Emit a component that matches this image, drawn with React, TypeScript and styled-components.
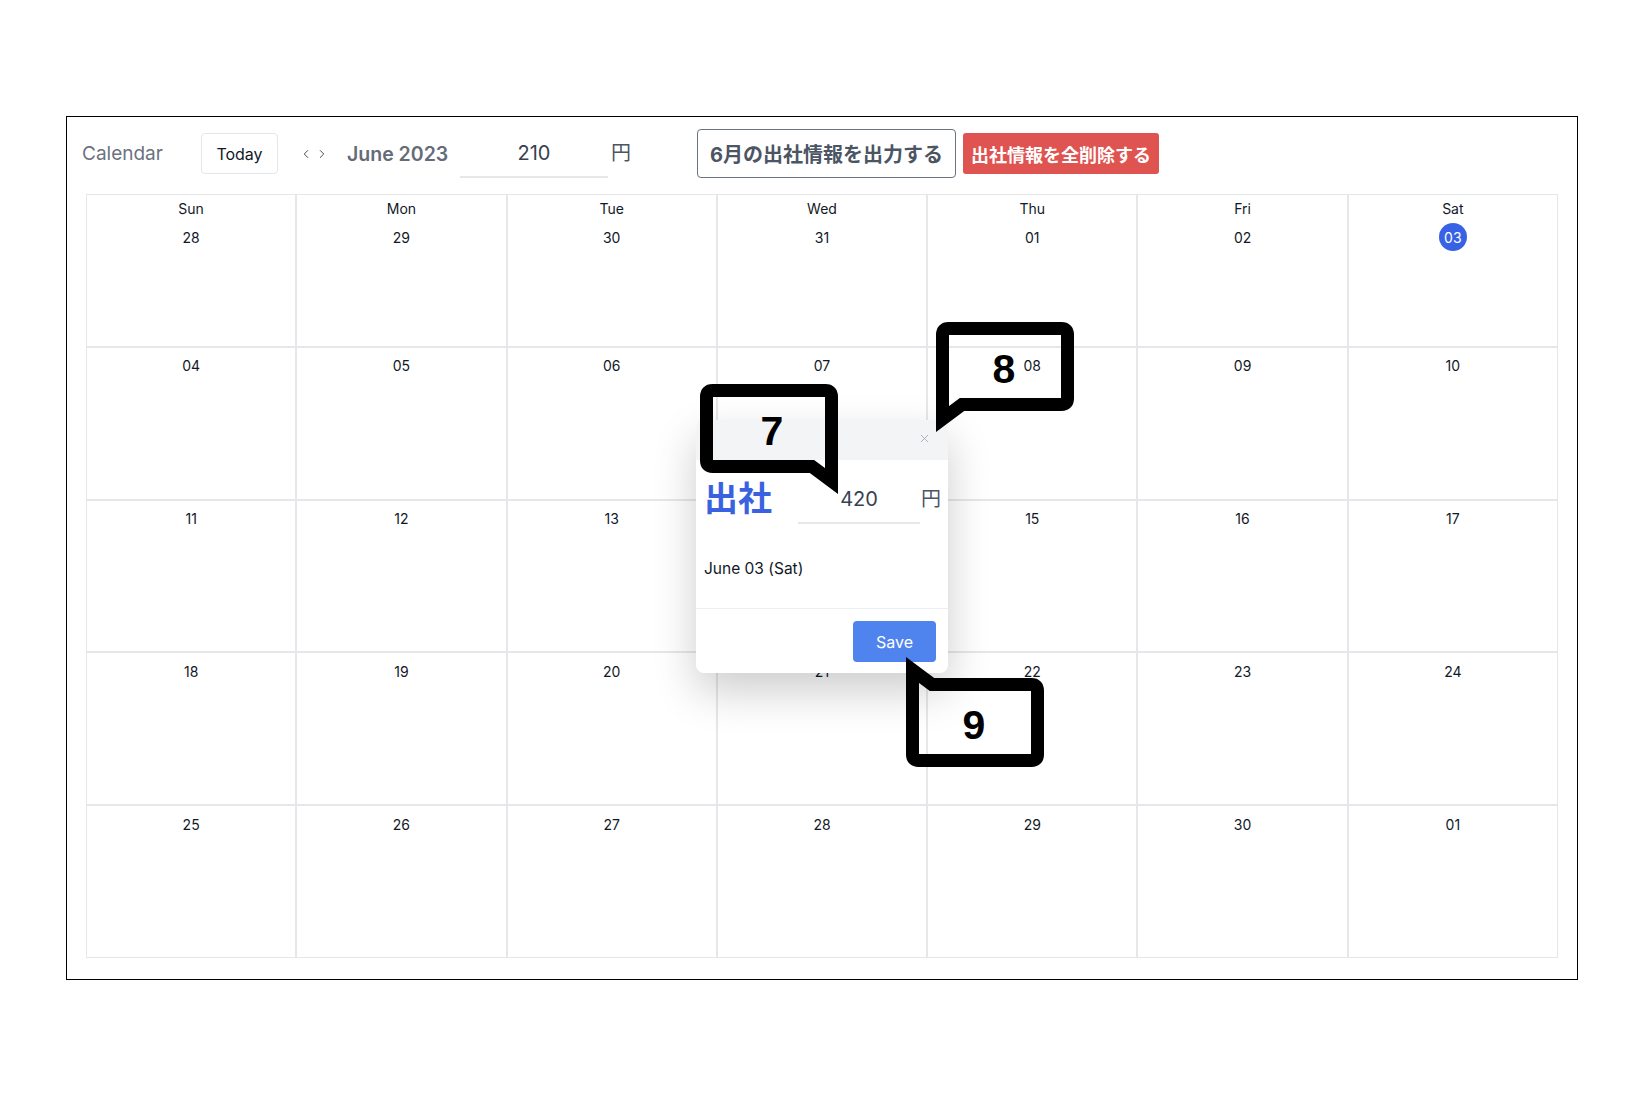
import React from "react";
import styled, { createGlobalStyle } from "styled-components";
import { ChevronLeft, ChevronRight, X } from "lucide-react";

const GlobalStyle = createGlobalStyle`
  html, body { margin: 0; padding: 0; background: #fff; }
  body { font-family: "Inter", "Noto Sans CJK JP", sans-serif; color: #111827; }
  * { box-sizing: border-box; }
`;

const Page = styled.div`
  width: 1644px;
  height: 1096px;
  padding: 116px 0 0 66px;
`;

const Frame = styled.div`
  position: relative;
  width: 1512px;
  height: 864px;
  border: 1px solid #000;
  display: flex;
  flex-direction: column;
`;

const Toolbar = styled.div`
  display: flex;
  align-items: center;
  height: 49px;
  margin-top: 12px;
  padding-left: 15px;
`;

const AppTitle = styled.div`
  width: 119px;
  font-size: 19px;
  color: #6b7280;
`;

const TodayButton = styled.button`
  width: 77px;
  height: 41px;
  border: 1px solid #e5e7eb;
  border-radius: 4px;
  background: #fff;
  font-family: inherit;
  font-size: 16px;
  color: #111827;
  padding: 0;
`;

const NavGroup = styled.div`
  display: flex;
  align-items: center;
  gap: 2px;
  margin-left: 21px;
  color: #374151;
`;

const MonthTitle = styled.div`
  width: 113px;
  margin-left: 18px;
  font-size: 19.5px;
  font-weight: 600;
  color: #656b77;
`;

const AmountInput = styled.input<{ $width: number; $height: number; $pb: number }>`
  flex: none;
  width: ${(p) => p.$width}px;
  height: ${(p) => p.$height}px;
  border: none;
  border-bottom: 2px solid #e5e7eb;
  background: transparent;
  text-align: center;
  font-family: inherit;
  font-size: 20px;
  color: #374151;
  padding: 0 0 ${(p) => p.$pb}px;
  outline: none;
`;

const Yen = styled.span<{ $lh: number; $ml: number }>`
  flex: none;
  margin-left: ${(p) => p.$ml}px;
  font-size: 20px;
  line-height: ${(p) => p.$lh}px;
  color: #4b5563;
  align-self: flex-start;
`;

const OutlineButton = styled.button`
  margin-left: 66px;
  height: 49px;
  width: 259px;
  padding: 0;
  border: 1px solid #6b7280;
  border-radius: 4px;
  background: #fff;
  font-family: inherit;
  font-size: 20px;
  font-weight: 700;
  color: #4b5563;
`;

const DangerButton = styled.button`
  margin-left: 7px;
  height: 41px;
  width: 196px;
  padding: 0;
  border: none;
  border-radius: 3px;
  background: #df5350;
  font-family: inherit;
  font-size: 18px;
  font-weight: 700;
  color: #fff;
`;

const Grid = styled.div`
  flex: 1;
  margin: 16px 19px 21px;
  display: grid;
  grid-template-columns: repeat(7, 1fr);
  grid-template-rows: repeat(5, 1fr);
`;

const Cell = styled.div`
  border: 1px solid #e5e7eb;
  display: flex;
  flex-direction: column;
  align-items: center;
  gap: 4px;
  padding-top: 4px;
`;

const DayName = styled.div`
  font-size: 14px;
  line-height: 20px;
  color: #111827;
`;

const DateLabel = styled.div<{ $today?: boolean }>`
  width: 28px;
  height: 28px;
  border-radius: 50%;
  display: flex;
  align-items: center;
  justify-content: center;
  font-size: 14px;
  color: ${(p) => (p.$today ? "#fff" : "#111827")};
  background: ${(p) => (p.$today ? "#3862e6" : "transparent")};
`;

const Popup = styled.div`
  position: absolute;
  left: 629px;
  top: 303px;
  width: 252px;
  height: 253px;
  background: #fff;
  border-radius: 8px;
  box-shadow: 0 18px 44px rgba(0, 0, 0, 0.2);
  display: flex;
  flex-direction: column;
  overflow: hidden;
`;

const PopupHeader = styled.div`
  height: 40px;
  background: #f3f4f6;
  display: flex;
  align-items: center;
  justify-content: flex-end;
  padding-right: 17px;
  padding-bottom: 3px;
  color: #9ca3af;
`;

const PopupBody = styled.div`
  height: 148px;
  padding: 18px 6px 0 8px;
`;

const TitleRow = styled.div`
  display: flex;
  align-items: flex-start;
  height: 46px;
`;

const PopupTitle = styled.div`
  flex: none;
  width: 94px;
  font-size: 34px;
  line-height: 42px;
  font-weight: 700;
  color: #3a62e0;
`;

const DateText = styled.div`
  margin-top: 33px;
  font-size: 15.5px;
  line-height: 24px;
  color: #111827;
`;

const PopupFooter = styled.div`
  flex: 1;
  border-top: 1px solid #eceef1;
  display: flex;
  justify-content: flex-end;
  align-items: flex-start;
  padding: 12px 12px 0;
`;

const SaveButton = styled.button`
  width: 83px;
  height: 41px;
  border: none;
  border-radius: 4px;
  background: #4f84ee;
  color: #fff;
  font-family: inherit;
  font-size: 16px;
  padding: 0;
`;

const BubbleWrap = styled.div<{ $left: number; $top: number }>`
  position: absolute;
  left: ${(p) => p.$left}px;
  top: ${(p) => p.$top}px;
  width: 139px;
  height: 112px;
  pointer-events: none;
`;

const BubbleSvg = styled.svg<{ $flipX: boolean; $flipY: boolean }>`
  position: absolute;
  left: 0;
  top: 0;
  overflow: visible;
  transform: scale(${(p) => (p.$flipX ? -1 : 1)}, ${(p) => (p.$flipY ? -1 : 1)});
`;

const BubbleLabel = styled.div<{ $boxTop: number; $dx: number }>`
  position: absolute;
  left: ${(p) => p.$dx}px;
  top: ${(p) => p.$boxTop}px;
  width: 138px;
  height: 89px;
  display: flex;
  align-items: center;
  justify-content: center;
  padding-top: 6px;
  font-family: "Liberation Sans", "Inter", sans-serif;
  font-size: 41px;
  font-weight: 700;
  color: #000;
`;

const BUBBLE_PATH =
  "M 12.5 6.5 H 125.5 Q 131.5 6.5 131.5 12.5 V 97 L 112 82.5 H 12.5 Q 6.5 82.5 6.5 76.5 V 12.5 Q 6.5 6.5 12.5 6.5 Z";

type BubbleProps = {
  left: number;
  top: number;
  label: string;
  tail: "br" | "bl" | "tl";
  dx?: number;
};

function Callout({ left, top, label, tail, dx = 0 }: BubbleProps) {
  const flipX = tail !== "br";
  const flipY = tail === "tl";
  return (
    <BubbleWrap $left={left} $top={top}>
      <BubbleSvg width="139" height="112" viewBox="0 0 139 112" $flipX={flipX} $flipY={flipY}>
        <path
          d={BUBBLE_PATH}
          fill="none"
          stroke="#000"
          strokeWidth={13}
          strokeLinejoin="miter"
          strokeMiterlimit={10}
        />
      </BubbleSvg>
      <BubbleLabel $boxTop={flipY ? 23 : 0} $dx={dx}>{label}</BubbleLabel>
    </BubbleWrap>
  );
}

const DAY_NAMES = ["Sun", "Mon", "Tue", "Wed", "Thu", "Fri", "Sat"];
const DATES = [
  "28", "29", "30", "31", "01", "02", "03",
  "04", "05", "06", "07", "08", "09", "10",
  "11", "12", "13", "14", "15", "16", "17",
  "18", "19", "20", "21", "22", "23", "24",
  "25", "26", "27", "28", "29", "30", "01",
];

export default function App() {
  return (
    <Page>
      <GlobalStyle />
      <Frame>
        <Toolbar>
          <AppTitle>Calendar</AppTitle>
          <TodayButton>Today</TodayButton>
          <NavGroup>
            <ChevronLeft size={14} strokeWidth={1.6} />
            <ChevronRight size={14} strokeWidth={1.6} />
          </NavGroup>
          <MonthTitle>June 2023</MonthTitle>
          <AmountInput $width={148} $height={49} $pb={0} value="210" readOnly />
          <Yen $lh={49} $ml={3}>円</Yen>
          <OutlineButton>6月の出社情報を出力する</OutlineButton>
          <DangerButton>出社情報を全削除する</DangerButton>
        </Toolbar>
        <Grid>
          {DATES.map((d, i) => (
            <Cell key={i}>
              {i < 7 && <DayName>{DAY_NAMES[i]}</DayName>}
              <DateLabel $today={i === 6}>{d}</DateLabel>
            </Cell>
          ))}
        </Grid>
        <Popup>
          <PopupHeader>
            <X size={13} strokeWidth={1.5} />
          </PopupHeader>
          <PopupBody>
            <TitleRow>
              <PopupTitle>出社</PopupTitle>
              <AmountInput $width={122} $height={46} $pb={3} value="420" readOnly />
              <Yen $lh={42} $ml={1}>円</Yen>
            </TitleRow>
            <DateText>June 03 (Sat)</DateText>
          </PopupBody>
          <PopupFooter>
            <SaveButton>Save</SaveButton>
          </PopupFooter>
        </Popup>
        <Callout left={633} top={267} label="7" tail="br" dx={3} />
        <Callout left={868} top={205} label="8" tail="bl" />
        <Callout left={838} top={538} label="9" tail="tl" />
      </Frame>
    </Page>
  );
}
